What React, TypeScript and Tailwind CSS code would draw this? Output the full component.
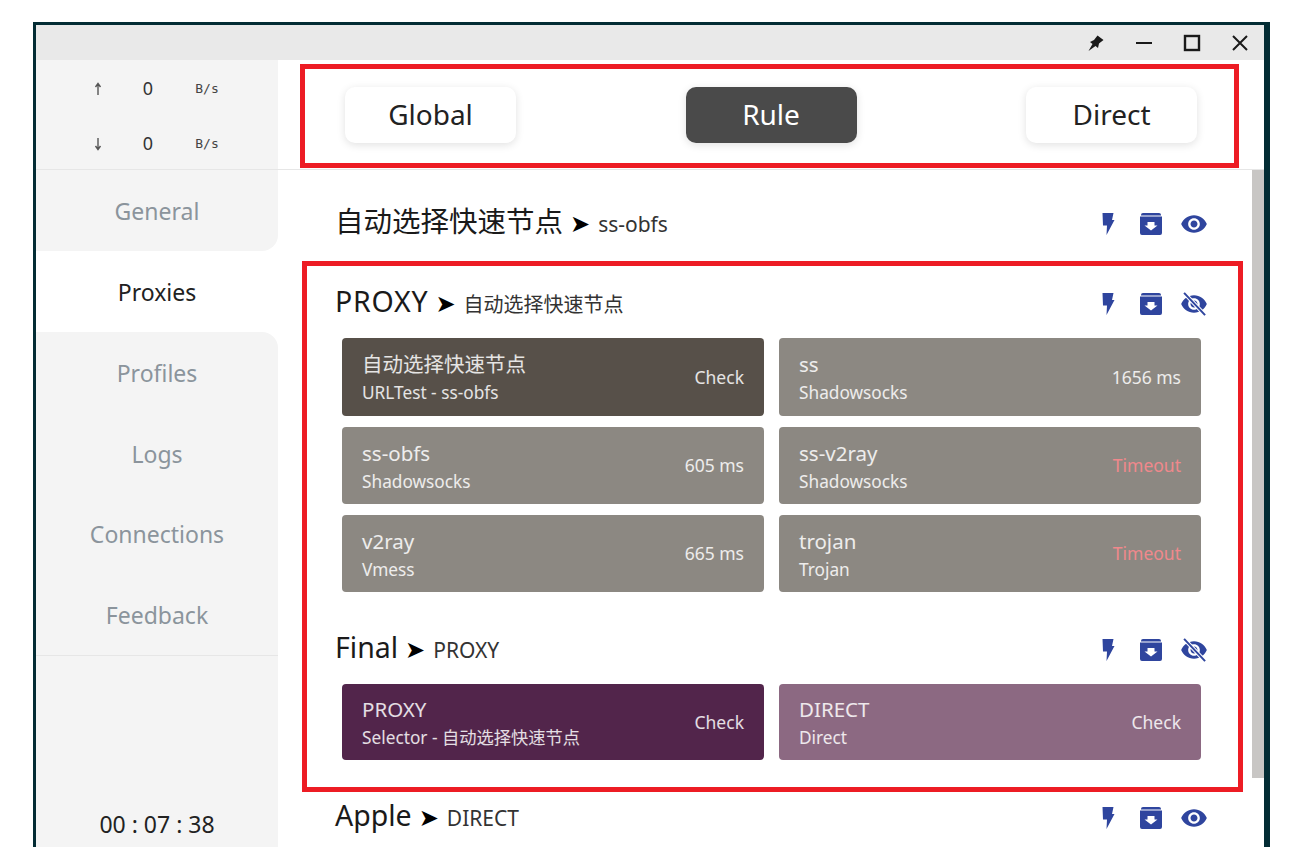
type CardT = {
  name: string;
  type: string;
  status: string;
  tone: string;
  statusTone?: string;
};

const navItems = ["General", "Proxies", "Profiles", "Logs", "Connections", "Feedback"];

const proxyCards: CardT[] = [
  { name: "自动选择快速节点", type: "URLTest - ss-obfs", status: "Check", tone: "bg-[#575049]" },
  { name: "ss", type: "Shadowsocks", status: "1656 ms", tone: "bg-[#8c8882]" },
  { name: "ss-obfs", type: "Shadowsocks", status: "605 ms", tone: "bg-[#8c8882]" },
  { name: "ss-v2ray", type: "Shadowsocks", status: "Timeout", tone: "bg-[#8c8882]", statusTone: "text-[#f0888c]" },
  { name: "v2ray", type: "Vmess", status: "665 ms", tone: "bg-[#8c8882]" },
  { name: "trojan", type: "Trojan", status: "Timeout", tone: "bg-[#8c8882]", statusTone: "text-[#f0888c]" },
];

const finalCards: CardT[] = [
  { name: "PROXY", type: "Selector - 自动选择快速节点", status: "Check", tone: "bg-[#52254b]" },
  { name: "DIRECT", type: "Direct", status: "Check", tone: "bg-[#8c6982]" },
];

const Bolt = () => (
  <svg width="14" height="24" viewBox="0 0 14 24" fill="#2f459e">
    <path d="M1.500 1H12.500L11 8h2.500L5.500 23 6 13.500H2z" />
  </svg>
);

const Archive = () => (
  <svg width="24" height="24" viewBox="0 0 24 24" fill="#2f459e">
    <path d="M4 1h16a2 2 0 0 1 2 2v.500H2V3a2 2 0 0 1 2-2z" />
    <path fillRule="evenodd" d="M1 4.500h22V21a2 2 0 0 1-2 2H3a2 2 0 0 1-2-2zm7.500 5.500v3.500H5.500l6.500 5 6.500-5h-3V10z" />
  </svg>
);

const eyePath =
  "M12 4.500C7 4.500 2.730 7.610 1 12c1.730 4.390 6 7.500 11 7.500s9.270-3.110 11-7.500c-1.730-4.390-6-7.500-11-7.500zM12 17c-2.760 0-5-2.240-5-5s2.240-5 5-5 5 2.240 5 5-2.240 5-5 5zm0-8c-1.660 0-3 1.340-3 3s1.340 3 3 3 3-1.340 3-3-1.340-3-3-3z";

const Eye = () => (
  <svg width="28" height="28" viewBox="0 0 24 24" fill="#2f459e">
    <path d={eyePath} />
  </svg>
);

const EyeOff = () => (
  <svg width="28" height="28" viewBox="0 0 24 24" fill="#2f459e">
    <path d={eyePath} />
    <path d="M3.500 2.500 21.500 21.500" stroke="#fff" strokeWidth="3.400" />
    <path d="M3.500 2.500 21.500 21.500" stroke="#2f459e" strokeWidth="1.700" />
  </svg>
);

const Pin = () => (
  <svg width="18" height="18" viewBox="0 0 18 18" fill="#1a1a1a">
    <path d="M1.500 17 5.500 10 3 8 7 6 10.500 1.500 16.500 6 12 9.500 11 14 8.500 12z" />
  </svg>
);

const TrafficArrow = ({ down }: { down?: boolean }) => (
  <svg width="8" height="14" viewBox="0 0 8 14" fill="none" stroke="#555" strokeWidth="1.400" className={`mx-auto ${down ? "rotate-180" : ""}`}>
    <path d="M4 13V2M1.500 5 4 1.500 6.500 5" />
  </svg>
);

const GroupHeading = ({ name, now, hidden, cjk }: { name: string; now: string; hidden?: boolean; cjk?: boolean }) => (
  <div className="flex items-center justify-between h-[74px] pl-[57px] pr-[37px]">
    <div className="flex items-baseline text-[#1a1a1a]">
      <span className={`text-[28.500px] leading-none ${cjk ? "tracking-[0.8px]" : ""}`}>{name}</span>
      <span className="ml-[7px] mr-[8px] text-[24px] leading-none text-black font-['DejaVu_Sans']">➤</span>
      <span className={`leading-none text-[#333] ${cjk ? "text-[20px]" : "text-[21px]"}`}>{now}</span>
    </div>
    <div className="flex items-center mt-[5px]">
      <span className="flex justify-center w-[43px]"><Bolt /></span>
      <span className="flex justify-center w-[43px]"><Archive /></span>
      <span className="flex justify-center w-[43px]">{hidden ? <EyeOff /> : <Eye />}</span>
    </div>
  </div>
);

const ProxyCard = ({ card }: { card: CardT }) => (
  <div className={`flex items-center justify-between h-full px-[20px] rounded-[4px] text-white/85 ${card.tone}`}>
    <div className="flex flex-col pt-[2px]">
      <span className="text-[20.500px] leading-[30px]">{card.name}</span>
      <span className="text-[17.250px] leading-[28px]">{card.type}</span>
    </div>
    <span className={`text-[17.500px] ${card.statusTone ?? ""}`}>{card.status}</span>
  </div>
);

const Sidebar = () => (
  <aside className="flex flex-col w-[242px] bg-[#f4f4f4] shrink-0">
    <div className="h-[110px] pt-[1px] border-b border-[#e6e6e6] text-[#333]">
      {["up", "down"].map((dir) => (
        <div key={dir} className="grid grid-cols-[40px_60px_58px] items-center h-[55px] pl-[42px] text-center">
          <TrafficArrow down={dir === "down"} />
          <span className="text-[18px]">0</span>
          <span className="text-[13px] text-[#444] font-['DejaVu_Sans_Mono']">B/s</span>
        </div>
      ))}
    </div>
    <nav className="flex flex-col border-b border-[#e6e6e6] bg-white">
      {navItems.map((item) => (
        <div
          key={item}
          className={`flex items-center justify-center h-[80.800px] pt-[2px] text-[23px] ${
            item === "Proxies" ? "bg-white text-[#222]" : "bg-[#f4f4f4] text-[#8b949c]"
          } ${item === "General" ? "rounded-br-[16px]" : ""} ${item === "Profiles" ? "rounded-tr-[16px]" : ""}`}
        >
          {item}
        </div>
      ))}
    </nav>
    <div className="mt-auto mb-[8px] text-center text-[23px] leading-[30px] text-[#222]">00 : 07 : 38</div>
  </aside>
);

const ModeBar = () => (
  <div className="relative flex items-center justify-between h-[110px] pl-[67px] pr-[67px] border-b border-[#e6e6e6] shrink-0">
    {["Global", "Rule", "Direct"].map((mode) => (
      <div
        key={mode}
        className={`flex items-center justify-center w-[171px] h-[56px] pb-[2px] rounded-[10px] text-[28px] shadow-[0_2px_8px_rgba(0,0,0,0.12)] ${
          mode === "Rule" ? "bg-[#4a4a4a] text-white" : "bg-white text-[#222]"
        }`}
      >
        {mode}
      </div>
    ))}
    <div className="absolute left-[22px] top-[4px] w-[939px] h-[104px] border-[5px] border-[#ed1c24]" />
  </div>
);

export default function App() {
  return (
    <div className="h-[847px] overflow-hidden bg-white pl-[33px] pt-[22px] font-['Noto_Sans','Noto_Sans_CJK_SC',sans-serif]">
      <div className="flex flex-col w-[1237px] h-[825px] border-t-[3px] border-l-[3px] border-r-[6px] border-[#032c34]">
        <div className="flex items-center justify-end h-[35px] bg-[#e9e9e9] text-[#1a1a1a] shrink-0">
          <span className="flex justify-center w-[48px]"><Pin /></span>
          <span className="flex justify-center w-[48px]">
            <svg width="18" height="18" viewBox="0 0 18 18" stroke="#1a1a1a" strokeWidth="2" fill="none"><path d="M1 9h16" /></svg>
          </span>
          <span className="flex justify-center w-[48px]">
            <svg width="18" height="18" viewBox="0 0 18 18" stroke="#1a1a1a" strokeWidth="2.400" fill="none"><rect x="2" y="2" width="14" height="14" /></svg>
          </span>
          <span className="flex justify-center w-[48px]">
            <svg width="18" height="18" viewBox="0 0 18 18" stroke="#1a1a1a" strokeWidth="2" fill="none"><path d="M2 2l14 14M16 2 2 16" /></svg>
          </span>
        </div>
        <div className="flex flex-1 min-h-0">
          <Sidebar />
          <main className="flex flex-col flex-1 min-w-0 bg-white">
            <ModeBar />
            <div className="flex flex-1 min-h-0">
              <div className="relative flex-1 min-w-0 pt-[14px] overflow-hidden">
                <div className="pb-[6px]">
                  <GroupHeading name="自动选择快速节点" now="ss-obfs" />
                </div>
                <div className="pb-[18px]">
                  <GroupHeading name="PROXY" now="自动选择快速节点" hidden cjk />
                  <div className="grid grid-cols-[422px_422px] grid-rows-[78px_77px_77px] gap-x-[15px] gap-y-[11px] pl-[64px]">
                    {proxyCards.map((card) => (
                      <ProxyCard key={card.name} card={card} />
                    ))}
                  </div>
                </div>
                <div className="pb-[18px]">
                  <GroupHeading name="Final" now="PROXY" hidden />
                  <div className="grid grid-cols-[422px_422px] grid-rows-[76px] gap-x-[15px] pl-[64px]">
                    {finalCards.map((card) => (
                      <ProxyCard key={card.name} card={card} />
                    ))}
                  </div>
                </div>
                <GroupHeading name="Apple" now="DIRECT" />
                <div className="absolute left-[24px] top-[91px] w-[941px] h-[531px] border-[5px] border-[#ed1c24]" />
              </div>
              <div className="w-[12px] shrink-0">
                <div className="h-[608px] bg-[#c8c6c4]" />
              </div>
            </div>
          </main>
        </div>
      </div>
    </div>
  );
}
